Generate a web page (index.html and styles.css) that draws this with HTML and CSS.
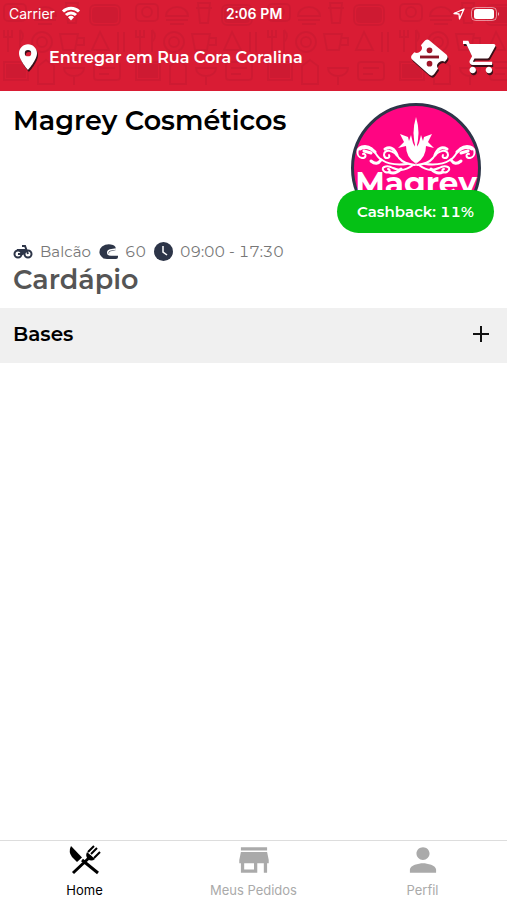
FILE: index.html
```
<!DOCTYPE html>
<html lang="pt-BR">
<head>
    <meta charset="UTF-8">
    <meta name="viewport" content="width=device-width, initial-scale=1.0">
    <title>Magrey Cosméticos</title>
    <link rel="stylesheet" href="styles.css">
</head>
<body>
    <header class="header">
        <svg class="pattern" aria-hidden="true">
            <defs>
                <pattern id="food" width="132" height="92" patternUnits="userSpaceOnUse">
                    <g fill="none" stroke="#b8182e" stroke-width="2">
                        <rect x="4" y="4" width="22" height="17" rx="4"/>
                        <circle cx="15" cy="12" r="5"/>
                        <path d="M34 16a11 9 0 0 1 22 0zM34 20h22M38 24h14"/>
                        <path d="M66 3h12l-2 20h-8zM64 8h16"/>
                        <rect x="90" y="5" width="30" height="20" rx="5"/>
                        <circle cx="105" cy="15" r="6"/>
                        <path d="M8 30v22M4 30v7h8v-7M20 30v22M20 30q6 6 0 12"/>
                        <circle cx="42" cy="42" r="10"/>
                        <circle cx="42" cy="42" r="5"/>
                        <path d="M60 34h18l-3 16H63zM78 38h6v7h-7"/>
                        <path d="M92 50l8-18 9 18zM118 32v20M124 32v20"/>
                        <path d="M4 62h24v18H4zM9 67h14M9 73h14"/>
                        <path d="M38 84V66l8-6 8 6v18zM64 68a10 8 0 0 0 20 0zM74 76v9"/>
                        <rect x="94" y="62" width="26" height="18" rx="3"/>
                        <path d="M99 68h16M99 74h10"/>
                    </g>
                    <g fill="#b8182e">
                        <rect x="92" y="7" width="26" height="16" rx="4"/>
                        <rect x="6" y="64" width="20" height="14"/>
                    </g>
                </pattern>
            </defs>
            <rect width="100%" height="100%" fill="url(#food)"/>
        </svg>
        <div class="status">
            <div class="carrier">
                <span>Carrier</span>
                <svg width="20" height="15" viewBox="0 0 20 15" fill="none" stroke="#fff" stroke-width="3">
                    <path d="M2 5.5a11.5 11.5 0 0 1 16 0M5 9a7 7 0 0 1 10 0"/>
                    <path d="M10 14.500l-3-3.200a4.300 4.300 0 0 1 6 0z" fill="#fff" stroke="none"/>
                </svg>
            </div>
            <time class="clock">2:06 PM</time>
            <div class="battery">
                <svg width="12" height="12" viewBox="0 0 12 12" fill="none" stroke="#fff" stroke-width="1.300" stroke-linejoin="round">
                    <path d="M1 5.500L11 1 6.500 11l-.5-5z"/>
                </svg>
                <svg width="28" height="14" viewBox="0 0 28 14">
                    <rect x=".5" y=".5" width="25" height="13" rx="4" fill="none" stroke="#fff" stroke-opacity=".5"/>
                    <rect x="3" y="2" width="20" height="10" rx="2.500" fill="#fff"/>
                    <path d="M27 5q2 2 0 4z" fill="#fff" opacity=".7"/>
                </svg>
            </div>
        </div>
        <div class="bar">
            <button class="address" type="button">
                <svg class="shadow" width="18" height="26" viewBox="5 2 14 20" fill="#fff">
                    <path d="M12 2C8.130 2 5 5.130 5 9c0 5.250 7 13 7 13s7-7.750 7-13c0-3.870-3.130-7-7-7zm0 9.500a2.500 2.500 0 0 1 0-5 2.500 2.500 0 0 1 0 5z"/>
                </svg>
                <span>Entregar em Rua Cora Coralina</span>
            </button>
            <div class="actions">
                <button type="button" aria-label="Cupons">
                    <svg class="shadow" width="39" height="38" viewBox="0 0 40 40">
                        <path d="M14.500 3.500Q17 0 20 2.500L38 17.500Q40 20 38 22.500L36 25Q32.500 23 29.500 26T29 32L25 38Q22.500 41 19.500 38.500L2 23Q-.5 20.500 1.500 18L4 15Q7.500 17 10.500 14T11 7.500z" fill="#fff"/>
                        <path d="M10 20h20" stroke="#8c1424" stroke-width="3"/>
                        <circle cx="20" cy="13" r="3" fill="#a01628"/>
                        <circle cx="20" cy="27" r="3" fill="#a01628"/>
                    </svg>
                </button>
                <button type="button" aria-label="Carrinho">
                    <svg class="shadow" width="34" height="34" viewBox="1 2 21 20" fill="#fff">
                        <path d="M7 18c-1.100 0-1.990.9-1.990 2S5.900 22 7 22s2-.9 2-2-.9-2-2-2zM1 2v2h2l3.600 7.590-1.350 2.450c-.16.280-.25.610-.25.960 0 1.100.9 2 2 2h12v-2H7.420c-.14 0-.25-.11-.25-.25l.03-.12.9-1.630h7.450c.75 0 1.410-.41 1.750-1.030l3.580-6.490A1 1 0 0 0 20 4H5.210l-.94-2H1zm16 16c-1.100 0-1.990.9-1.990 2s.89 2 1.990 2 2-.9 2-2-.9-2-2-2z"/>
                    </svg>
                </button>
            </div>
        </div>
    </header>

    <main class="main">
        <section class="store">
            <div class="top">
                <h1>Magrey Cosméticos</h1>
                <div class="brand">
                    <svg class="logo" width="130" height="130" viewBox="0 0 130 130">
                        <circle cx="65" cy="65" r="63.500" fill="#ff0582" stroke="#2d3548" stroke-width="3"/>
                        <g fill="#fff">
                            <path d="M65 46Q60 30 65 14Q70 30 65 46z"/>
                            <path d="M64 60Q55 54 55 43L47 45 53 39 49 31 57 34 58 38 60 32 62 40 64 44z"/>
                            <path d="M66 60Q75 54 75 43L83 45 77 39 81 31 73 34 72 38 70 32 68 40 66 44z"/>
                            <path d="M65 62L61 50 64 42h2l3 8z"/>
                        </g>
                        <g id="scroll" fill="none" stroke="#fff" stroke-width="2" stroke-linecap="round">
                            <path d="M64 62Q53 61 48 55C42 46 33 46 33 52 34 57 40 55 38 52"/>
                            <path d="M62 62Q52 70 42 65C35 61 28 65 34 69 39 71 40 66 37 66"/>
                            <path d="M56 61Q40 63 31 57C24 54 24 43 14 43 4 43 5 54 11 55 16 55 15 50 12 51"/>
                            <path d="M30 57Q26 63 20 58M24 49Q16 42 9 46M20 50L13 48M46 52Q42 42 34 46M50 66Q44 72 38 69" stroke-width="3"/>
                        </g>
                        <use href="#scroll" transform="matrix(-1 0 0 1 130 0)"/>
                        <text class="logo-text" x="65" y="91" text-anchor="middle">Magrey</text>
                    </svg>
                    <span class="cashback">Cashback: 11%</span>
                </div>
            </div>
            <div class="info">
                <span>
                    <svg width="20" height="14" viewBox="0 0 20 14" fill="none" stroke="#2d3548" stroke-width="2">
                        <circle cx="5" cy="9" r="3.500"/>
                        <circle cx="15" cy="9" r="3.500"/>
                        <path d="M5 9h4l4-4M4 5h5l3 1M9 1h3l3 8"/>
                        <path d="M8 4h5l1 2-4 4-2-1z" fill="#2d3548" stroke="none"/>
                    </svg>
                    Balcão
                </span>
                <span>
                    <svg width="19" height="16" viewBox="0 0 19 16">
                        <path d="M14 1Q8-1 3 2.500Q0 5 .5 9q.5 3 4 5.500L8 15h9q2 0 2-2v-2h-6q-3 0-3-2 0-2 3-2l4-1Q17 2 14 1z" fill="#2d3548"/>
                        <path d="M17 5l-6 1Q8 7 9 10q1 1 3 1h7" fill="none" stroke="#fff" stroke-width="1.500"/>
                    </svg>
                    60
                </span>
                <span>
                    <svg width="19" height="19" viewBox="0 0 19 19">
                        <circle cx="9.500" cy="9.500" r="9.500" fill="#2d3548"/>
                        <path d="M9 4v6l4 3" fill="none" stroke="#fff" stroke-width="1.500"/>
                    </svg>
                    09:00 - 17:30
                </span>
            </div>
            <h2>Cardápio</h2>
        </section>
        <button class="category" type="button">
            <span>Bases</span>
            <svg width="16" height="16" viewBox="0 0 16 16" stroke="#111" stroke-width="2">
                <path d="M8 0v16M0 8h16"/>
            </svg>
        </button>
    </main>

    <nav class="tabs">
        <a class="active" href="#home">
            <svg width="34" height="32" viewBox="0 0 34 32">
                <path d="M3 2Q0 8 4 13L9 18 14 13.500z" fill="#000"/>
                <path d="M5 29L23 12M14 16L30 29" fill="none" stroke="#000" stroke-width="3"/>
                <path d="M26 2l-6 6M29 4l-6 6M32 8l-6 6" fill="none" stroke="#000" stroke-width="2"/>
                <path d="M19 8l8 7q-4 3-7 0t-1-7z" fill="#000"/>
            </svg>
            <span>Home</span>
        </a>
        <a href="#pedidos">
            <svg width="36" height="32" viewBox="1 2 22 20" preserveAspectRatio="none" fill="currentColor">
                <path d="M20 4H4v2h16V4zm1 10v-2l-1-5H4l-1 5v2h1v6h10v-6h4v6h2v-6h1zm-9 4H6v-4h6v4z"/>
            </svg>
            <span>Meus Pedidos</span>
        </a>
        <a href="#perfil">
            <svg width="36" height="32" viewBox="1 2 22 20" preserveAspectRatio="none" fill="currentColor">
                <path d="M12 12c2.210 0 4-1.790 4-4s-1.790-4-4-4-4 1.790-4 4 1.790 4 4 4zm0 2c-2.670 0-8 1.340-8 4v2h16v-2c0-2.660-5.330-4-8-4z"/>
            </svg>
            <span>Perfil</span>
        </a>
    </nav>
</body>
</html>
```

FILE: styles.css
```
*{
    margin:0;
    padding:0;
    box-sizing: border-box;
}
body {
    display: flex;
    flex-direction: column;
    min-height: 100vh;
    background-color: #fff;
    font-family: Montserrat, Inter, sans-serif;
    font-size: 16px;
    font-variant-numeric: tabular-nums;
    color: #000;
}
button {
    border:0;
    background: none;
    font-family: inherit;
    color: inherit;
    cursor: pointer;
}
svg {
    display: block;
    flex-shrink: 0;
}
/* header */
.header {
    position: relative;
    padding-bottom: 4px;
    background-color: #d91c34;
    color: #fff;
}
.pattern {
    position: absolute;
    top: 0;
    left: 0;
    width: 100%;
    height: 100%;
    opacity: 0.3;
}
.status,
.bar {
    position: relative;
}
.status {
    display: grid;
    grid-template-columns: 1fr auto 1fr;
    align-items: center;
    height: 27px;
    padding: 0 8px 0 9px;
    font-family: Inter, sans-serif;
    font-size: 14px;
}
.carrier,
.battery {
    display: flex;
    align-items: center;
    gap: 6px;
}
.battery {
    justify-content: flex-end;
}
.clock {
    font-weight: 600;
}
.bar {
    display: flex;
    justify-content: space-between;
    align-items: center;
    height: 60px;
    padding: 0 10px 0 19px;
}
.address {
    display: flex;
    align-items: center;
    gap: 12px;
    font-size: 16px;
    font-weight: 600;
}
.actions {
    display: flex;
    align-items: center;
    gap: 14px;
}
.shadow {
    overflow: visible;
    filter: drop-shadow(1px 2px 0 #3a1018);
}
/* store */
.main {
    flex: 1;
}
.store {
    padding: 12px 13px 10px;
}
.top {
    display: flex;
    justify-content: space-between;
    height: 138px;
}
h1 {
    font-size: 27px;
    line-height: 36px;
    font-weight: 600;
}
h2 {
    font-size: 27px;
    line-height: 36px;
    font-weight: 600;
    color: #555;
}
.brand {
    position: relative;
}
.logo {
    margin-right: 13px;
}
.logo-text {
    font-size: 31px;
    font-weight: 700;
    fill: #fff;
}
.cashback {
    position: absolute;
    right: 0;
    top: 87px;
    padding: 0 20px;
    border-radius: 22px;
    background-color: #05c115;
    color: #fff;
    font-size: 15px;
    line-height: 43px;
    font-weight: 600;
    white-space: nowrap;
}
.info {
    display: flex;
    gap: 8px;
    height: 21px;
    font-size: 15px;
    color: #777;
}
.info span {
    display: flex;
    align-items: center;
    gap: 7px;
}
.category {
    display: flex;
    justify-content: space-between;
    align-items: center;
    width: 100%;
    height: 55px;
    padding: 0 18px 4px 13px;
    background-color: #f0f0f0;
    font-size: 20px;
    font-weight: 600;
}
/* bottom tabs */
.tabs {
    display: flex;
    height: 60px;
    border-top: 1px solid #ddd;
}
.tabs a {
    flex: 1;
    display: flex;
    flex-direction: column;
    align-items: center;
    gap: 6px;
    padding-top: 3px;
    font-family: Inter, sans-serif;
    font-size: 13px;
    line-height: 16px;
    text-decoration: none;
    color: #aaa;
}
.tabs .active {
    color: #000;
}
```
